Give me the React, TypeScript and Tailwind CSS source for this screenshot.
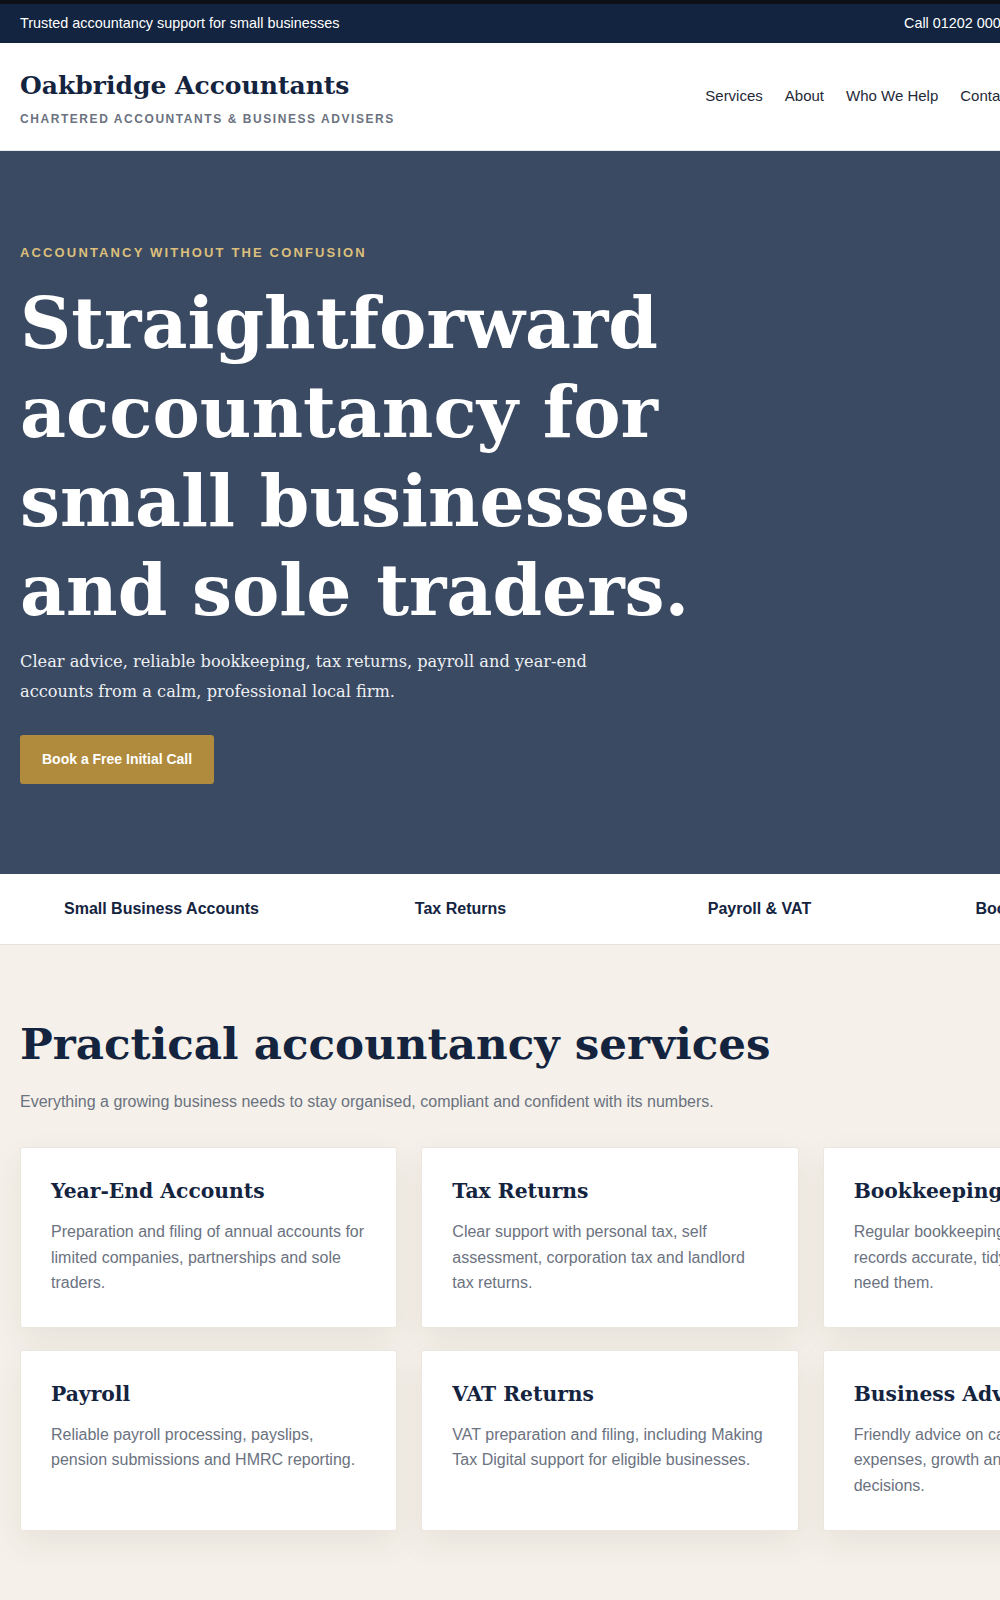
const services = [
  {
    title: 'Year-End Accounts',
    text: 'Preparation and filing of annual accounts for limited companies, partnerships and sole traders.',
  },
  {
    title: 'Tax Returns',
    text: 'Clear support with personal tax, self assessment, corporation tax and landlord tax returns.',
  },
  {
    title: 'Bookkeeping',
    text: 'Regular bookkeeping to help keep your records accurate, tidy and ready when you need them.',
  },
  {
    title: 'Payroll',
    text: 'Reliable payroll processing, payslips, pension submissions and HMRC reporting.',
  },
  {
    title: 'VAT Returns',
    text: 'VAT preparation and filing, including Making Tax Digital support for eligible businesses.',
  },
  {
    title: 'Business Advice',
    text: 'Friendly advice on cash flow, tax planning, expenses, growth and important business decisions.',
  },
]

const highlights = ['Small Business Accounts', 'Tax Returns', 'Payroll & VAT', 'Bookkeeping Support']

const navLinks = ['Services', 'About', 'Who We Help', 'Contact']

const serif = "font-['DejaVu_Serif',Georgia,serif]"

export default function App() {
  return (
    <div className="w-full overflow-hidden bg-[#f5f1ea] font-['Liberation_Sans',Arial,sans-serif]">
      <div className="w-[1220px] min-h-[1600px]">
        <div className="h-1 bg-[#0d1117]" />

        {/* Top bar */}
        <div className="bg-[#12243f] text-white">
          <div className="px-5 h-[39px] flex items-center justify-between text-[14.4px]">
            <span>Trusted accountancy support for small businesses</span>
            <span>Call 01202 000000 &nbsp;|&nbsp; admin@oakbridge.co.uk</span>
          </div>
        </div>

        {/* Header */}
        <header className="bg-white border-b border-[#e5e7eb]">
          <div className="px-5 h-[107px] flex items-center justify-between">
            <div className="pt-1">
              <div className={`${serif} text-[25px] font-bold leading-[34px] text-[#14243f]`}>
                Oakbridge Accountants
              </div>
              <div className="mt-[7px] text-[12px] font-bold tracking-[0.13em] text-[#6b7280] uppercase">
                Chartered Accountants &amp; Business Advisers
              </div>
            </div>
            <nav className="flex items-center gap-[22px] text-[15px] text-[#1f2937]">
              {navLinks.map((l) => (
                <a key={l} href="#">{l}</a>
              ))}
              <a href="#" className="ml-[7px] px-5 py-2.5 bg-[#14243f] text-white rounded-[3px] text-[14px] font-bold">
                Free Consultation
              </a>
            </nav>
          </div>
        </header>

        {/* Hero */}
        <section className="bg-[#3a4a62]">
          <div className="px-5 pt-[92px] pb-[90px]">
            <p className="text-[13px] font-bold tracking-[0.165em] text-[#dcbf7c] uppercase leading-5">
              Accountancy without the confusion
            </p>
            <h1 className={`${serif} mt-4 max-w-[700px] text-[71px] font-bold leading-[89px] text-white`}>
              Straightforward accountancy for small businesses and sole traders.
            </h1>
            <p className={`${serif} mt-3 max-w-[600px] text-[16.2px] leading-[30px] text-[#eef0f4]`}>
              Clear advice, reliable bookkeeping, tax returns, payroll and year-end accounts from a calm,
              professional local firm.
            </p>
            <a
              href="#"
              className="mt-7 inline-block rounded-[3px] bg-[#b08b3d] px-[22px] py-[14px] text-[14px] font-bold leading-[21px] text-white"
            >
              Book a Free Initial Call
            </a>
          </div>
        </section>

        {/* Highlights strip */}
        <div className="bg-white border-b border-[#e6e1d6]">
          <div className="px-5 h-[70px] grid grid-cols-4 gap-4 items-center">
            {highlights.map((h) => (
              <div key={h} className="text-center text-[16px] font-bold text-[#14243f]">
                {h}
              </div>
            ))}
          </div>
        </div>

        {/* Services */}
        <section className="px-5 pt-[70px] pb-16">
          <h2 className={`${serif} text-[43.6px] font-bold leading-[58px] text-[#14243f]`}>
            Practical accountancy services
          </h2>
          <p className="mt-4 text-[16px] leading-[26px] text-[#6b7280]">
            Everything a growing business needs to stay organised, compliant and confident with its numbers.
          </p>
          <div className="mt-8 grid grid-cols-3 gap-x-6 gap-y-[22px]">
            {services.map((s) => (
              <div
                key={s.title}
                className="rounded-[3px] border border-[#ece7de] bg-white px-[30px] pt-7 pb-[31px] shadow-[0_12px_32px_rgba(70,55,25,0.08)]"
              >
                <h3 className={`${serif} text-[20.3px] font-bold leading-[31px] text-[#14243f]`}>{s.title}</h3>
                <p className="mt-3 text-[16px] leading-[25.6px] text-[#6b7280]">{s.text}</p>
              </div>
            ))}
          </div>
        </section>
      </div>
    </div>
  )
}
